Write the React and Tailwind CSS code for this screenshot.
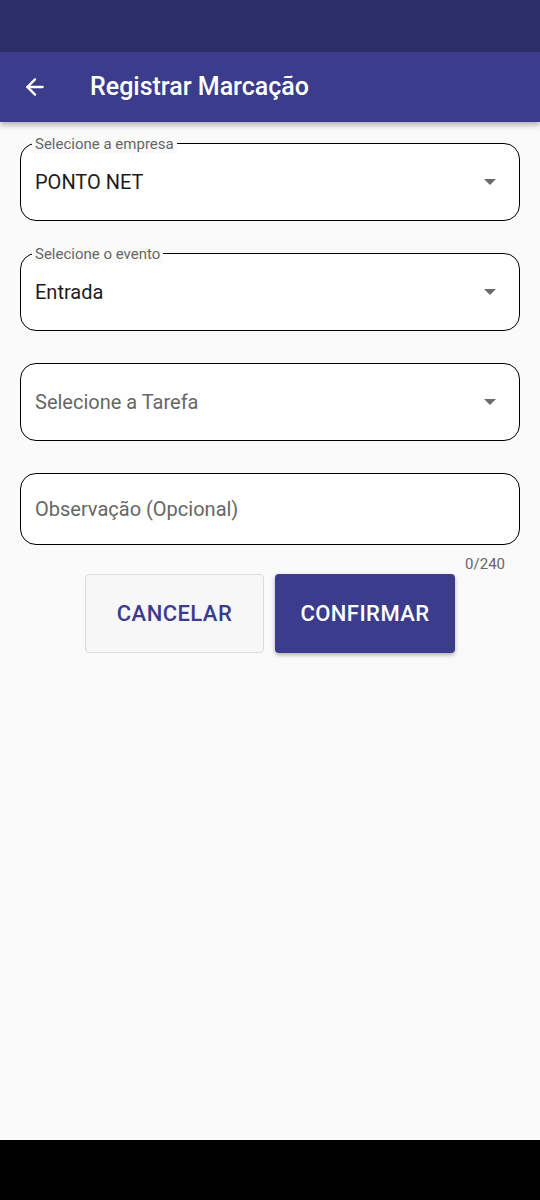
import { ArrowLeft } from 'lucide-react';

const Caret = () => (
  <svg width="12" height="6" viewBox="0 0 12 6" className="shrink-0">
    <path d="M0 0h12L6 6z" fill="#6b6b6b" />
  </svg>
);

const SelectField = ({ label, value, placeholder }) => (
  <div className="relative">
    <div className="h-[78px] rounded-[16px] border border-black bg-white flex items-center justify-between pl-[14px] pr-[23px]">
      {value ? (
        <span className="text-[20px] text-[#1c1c1c]">{value}</span>
      ) : (
        <span className="text-[20px] text-[#666]">{placeholder}</span>
      )}
      <Caret />
    </div>
    {label && (
      <span className="absolute left-[12px] -top-[8px] bg-[#fafafa] px-[3px] text-[15px] leading-[18px] text-[#666]">
        {label}
      </span>
    )}
  </div>
);

export default function App() {
  return (
    <div className="w-[540px] h-[1200px] flex flex-col bg-[#fafafa] font-['Roboto',sans-serif]">
      {/* status bar */}
      <div className="h-[52px] bg-[#2d2f6b]" />

      {/* app bar */}
      <div className="h-[70px] bg-[#3c3c8c] flex items-center shadow-[0_3px_6px_rgba(0,0,0,0.3)] relative z-10">
        <ArrowLeft className="ml-[22px] w-[26px] h-[26px] text-white" strokeWidth={2.2} />
        <h1 className="ml-[42px] text-[25px] font-medium text-white">Registrar Marcação</h1>
      </div>

      {/* form */}
      <div className="flex-1 px-5 pt-[21px]">
        <div className="flex flex-col gap-8">
          <SelectField label="Selecione a empresa" value="PONTO NET" />
          <SelectField label="Selecione o evento" value="Entrada" />
          <SelectField placeholder="Selecione a Tarefa" />
          <div className="h-[72px] rounded-[16px] border border-black bg-white flex items-center pl-[14px]">
            <span className="text-[20px] text-[#666]">Observação (Opcional)</span>
          </div>
        </div>
        <div className="flex justify-end pr-[15px] mt-[11px] text-[15px] leading-[17px] text-[#666]">0/240</div>
        <div className="flex justify-center gap-[11px] mt-[1px]">
          <button className="w-[179px] h-[79px] rounded-[4px] border border-[#dcdcdc] bg-[#f7f7f7] text-[22px] tracking-[0.02em] font-medium text-[#3c3c8c]">
            CANCELAR
          </button>
          <button className="w-[180px] h-[79px] rounded-[4px] bg-[#3c3c8c] text-[22px] tracking-[0.02em] font-medium text-white shadow-[0_2px_4px_rgba(0,0,0,0.3)]">
            CONFIRMAR
          </button>
        </div>
      </div>

      {/* navigation bar */}
      <div className="h-[60px] bg-black" />
    </div>
  );
}
